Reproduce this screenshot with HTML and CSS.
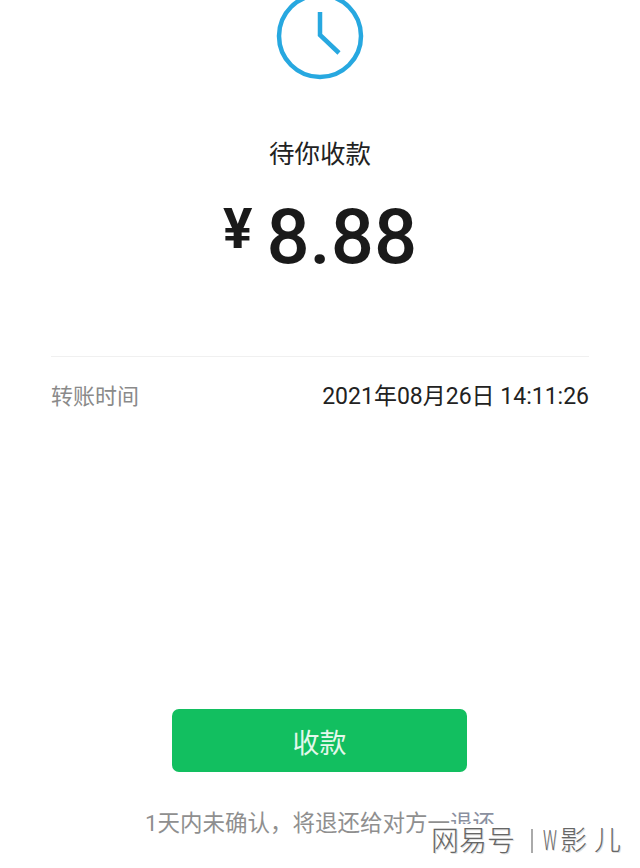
FILE: index.html
```html
<!DOCTYPE html>
<html lang="zh-CN">
<head>
<meta charset="utf-8">
<title>待你收款</title>
<link rel="stylesheet" href="styles.css">
</head>
<body>
<main class="page">
  <svg class="clock" width="92" height="80" viewBox="0 0 92 80" aria-hidden="true">
    <circle cx="46" cy="36" r="41" fill="none" stroke="#27a8e0" stroke-width="4.5"/>
    <path d="M46 12 V35 L65 53" fill="none" stroke="#27a8e0" stroke-width="4.5"/>
  </svg>
  <h1 class="title">待你收款</h1>
  <div class="amount"><span class="currency">¥</span><span class="value">8.88</span></div>
  <div class="row">
    <span class="label">转账时间</span>
    <span class="time">2021年08月26日 14:11:26</span>
  </div>
  <div class="spacer"></div>
  <button class="receive">收款</button>
  <p class="note">1天内未确认，将退还给对方一<span class="refund">退还</span></p>
</main>
<div class="watermark"><span class="wm-net">网易号</span><span class="wm-bar"></span><span class="wm-w">W</span><span class="wm-name">影儿</span></div>
</body>
</html>
```
FILE: styles.css
```css
* { box-sizing: border-box; }
html, body { margin: 0; padding: 0; }
body {
  width: 640px;
  height: 868px;
  overflow: hidden;
  background: #fff;
  position: relative;
  font-family: "Noto Sans CJK SC", Roboto, sans-serif;
}
.page {
  height: 868px;
  display: flex;
  flex-direction: column;
  align-items: center;
}
.clock { display: block; flex: none; }
.title {
  margin: 54px 0 0;
  font-size: 25.5px;
  line-height: 36px;
  font-weight: 400;
  color: #222;
}
.amount {
  margin-top: 24px;
  height: 92px;
  display: flex;
  align-items: flex-start;
  gap: 14px;
  color: #1a1a1a;
  font-family: Roboto, sans-serif;
  font-weight: 500;
}
.currency {
  font-size: 55px;
  line-height: 70px;
  font-weight: 700;
}
.value { font-size: 76px; line-height: 86px; }
.row {
  width: 538px;
  margin-top: 70px;
  padding-top: 24px;
  border-top: 1px solid #f0f0f0;
  display: flex;
  justify-content: space-between;
  font-size: 22px;
  line-height: 32px;
  font-family: Roboto, "Noto Sans CJK SC", sans-serif;
}
.label { color: #8a8a8a; }
.time { color: #222; font-size: 23px; }
.spacer { flex: 1; }
.receive {
  width: 295px;
  height: 63px;
  margin-right: 1px;
  border: 0;
  border-radius: 7px;
  background: #12bf60;
  color: #e4f8ec;
  font: 400 27px/63px "Noto Sans CJK SC", sans-serif;
}
.note {
  margin: 35px 0 29px;
  font-size: 22.5px;
  line-height: 32px;
  color: #8f8f8f;
  white-space: nowrap;
  font-family: Roboto, "Noto Sans CJK SC", sans-serif;
}
.refund { color: #8a90a0; }
.watermark {
  position: absolute;
  left: 431px;
  top: 824px;
  height: 30px;
  display: flex;
  align-items: center;
  white-space: nowrap;
  color: #666;
  background: #fff;
  text-shadow: 1px 1px 0 #ddd;
}
.wm-net { flex: none; font-size: 28px; line-height: 30px; font-weight: 300; }
.wm-bar { flex: none; width: 2px; height: 24px; margin: 3px 0 0 16px; background: #aaa; }
.wm-w {
  flex: none;
  display: inline-block;
  width: 16px;
  margin-left: 10px;
  font-size: 27px;
  line-height: 30px;
  font-weight: 300;
  transform: scaleX(0.6);
  transform-origin: left center;
}
.wm-name { flex: none; margin-left: 1px; font-size: 27px; line-height: 30px; letter-spacing: 7px; font-weight: 300; }
```
